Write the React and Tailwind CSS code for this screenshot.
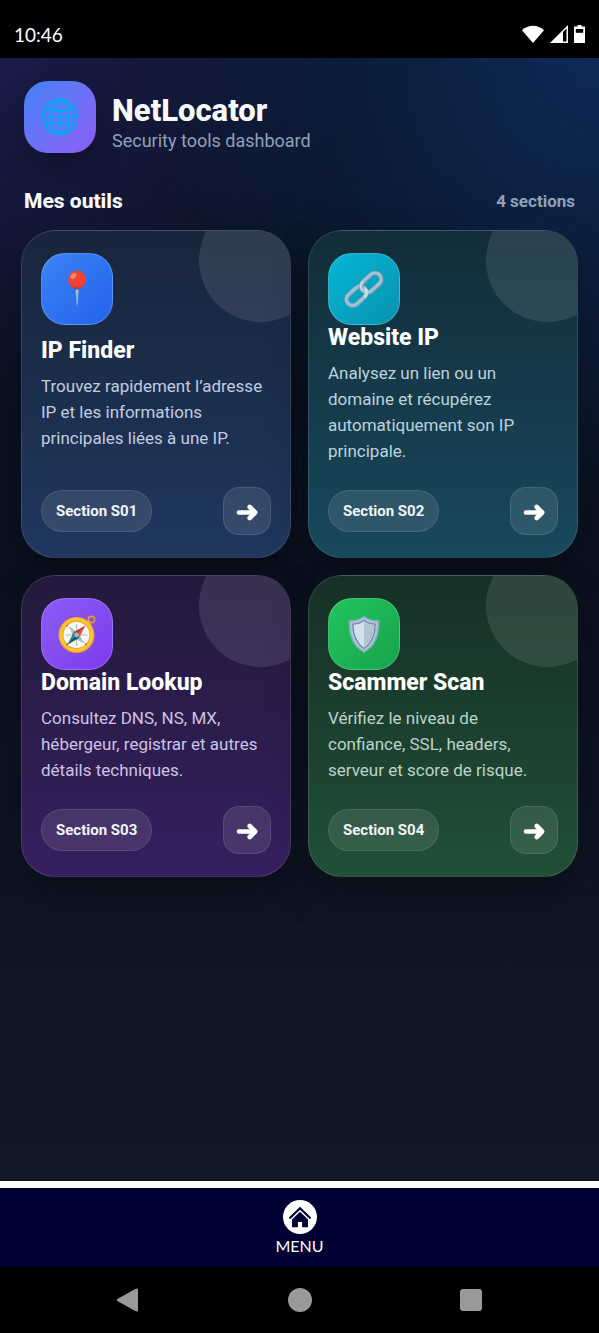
const GlobeIcon = () => (
    <svg viewBox="0 0 38 38" className="w-[38px] h-[38px]" fill="none" stroke="#0ea5f0" strokeWidth="2.4" aria-hidden="true">
        <circle cx="19" cy="19" r="17.2" />
        <ellipse cx="19" cy="19" rx="9.5" ry="17.2" />
        <path d="M19 2v34M2 19h34M4.5 10.5c8 3.4 21 3.4 29 0M4.5 27.5c8-3.4 21-3.4 29 0" />
    </svg>
);

const PinIcon = () => (
    <svg viewBox="0 0 40 40" className="w-10 h-10" aria-hidden="true">
        <path d="M18.3 18.500h3.600l-.9 14.500-.9 5.500-.9-5.500z" fill="#78a9cf" />
        <path d="M19.4 20h1.100l-.3 14z" fill="#c5dff0" />
        <path d="M18 18.500h4.200v2h-4.200z" fill="#39547f" />
        <circle cx="20.100" cy="10.500" r="8.900" fill="#f44336" />
        <path d="M12 14.500a8.900 8.900 0 0 0 16.600-1.500c-3 4.500-11 6-16.600 1.500z" fill="#dc3a30" />
        <ellipse cx="16.500" cy="7" rx="3.300" ry="2.300" transform="rotate(-40 16.500 7)" fill="#ff8a75" />
    </svg>
);

const LinkIcon = () => (
    <svg viewBox="0 0 40 40" className="w-10 h-10" fill="none" aria-hidden="true">
        <g transform="rotate(-42 20 20)">
            <rect x="-1.500" y="14" width="22.500" height="12.500" rx="6.250" stroke="#7d9dab" strokeWidth="4.600" />
            <rect x="-1.500" y="13.700" width="22.500" height="12.500" rx="6.250" stroke="#9fc0d2" strokeWidth="3.200" />
            <rect x="18" y="14" width="23" height="12.500" rx="6.250" stroke="#7898aa" strokeWidth="4.600" />
            <rect x="18" y="13.700" width="23" height="12.500" rx="6.250" stroke="#a5bfd3" strokeWidth="3.200" />
            <path d="M15 26.200c4 0 6-2.700 6-6.200" stroke="#c8dfe8" strokeWidth="3.400" />
            <path d="M24 13.700c-3.500 0-6 2.700-6 6.300" stroke="#bddbe7" strokeWidth="2" />
        </g>
    </svg>
);

const CompassIcon = () => (
    <svg viewBox="0 0 40 40" className="w-10 h-10" aria-hidden="true">
        <circle cx="34.500" cy="5.500" r="3.200" fill="none" stroke="#d99b2b" strokeWidth="1.700" />
        <path d="M29.500 7.500l3 3 2-2-3-3z" fill="#e9a825" />
        <circle cx="19.500" cy="21" r="18" fill="#e9a321" />
        <circle cx="19.500" cy="20.700" r="17" fill="#fcc52e" />
        <circle cx="19.500" cy="21" r="13.800" fill="#d8a13a" />
        <circle cx="19.500" cy="21" r="13" fill="#fbf9f5" />
        <path d="M19.500 10v22M8.500 21h22M11.700 13.200l15.600 15.600" stroke="#b4bcbb" strokeWidth="1.200" />
        <path d="M13 12.500l6.500 5.500 3.500 3 3 8-8-4.500-3-4z" fill="#aebdbd" />
        <path d="M28.500 11.500l-6.300 12.200-5.500-5.500z" fill="#e8544c" />
        <path d="M28.500 11.500l-9 9.500-2.800-2.800z" fill="#ba3e3c" />
        <path d="M10.500 30.500l6.200-12.300 5.500 5.500z" fill="#287e8c" />
        <path d="M10.500 30.500l9-9.500 2.700 2.700z" fill="#15606e" />
        <circle cx="19.500" cy="21" r="2.400" fill="#92b9c6" />
        <g fill="#8d6b2c">
            <circle cx="10.200" cy="11.700" r=".9" />
            <circle cx="28.900" cy="30.200" r=".9" />
            <circle cx="10.200" cy="30.200" r=".9" />
        </g>
    </svg>
);

const ShieldIcon = () => (
    <svg viewBox="0 0 40 40" className="w-10 h-10" aria-hidden="true">
        <path d="M20 1.500c4 3.500 9 4.800 15.500 4.500C36 21 32 32.500 20 39 8 32.500 4 21 4.500 6 11 6.300 16 5 20 1.500z" fill="#7fa8b3" />
        <path d="M20 3c4.200 3.200 8.500 4.300 14.200 4.200C34.300 21 30.500 31.500 20 37.500 9.500 31.500 5.700 21 5.800 7.200 11.500 7.300 15.800 6.200 20 3z" fill="#a9c4d2" />
        <path d="M20 6.500c3.500 2.500 7 3.500 11.200 3.700C31 21 28 29 20 34.500 12 29 9 21 8.800 10.200 13 10 16.500 9 20 6.500z" fill="#d4e1ed" stroke="#6f88a9" strokeWidth="1.300" />
        <path d="M20 7.500c3.500 2.300 6.500 3.200 10.400 3.500C30 21 27.300 28.500 20 33.700z" fill="#b3c4d3" />
    </svg>
);

const ArrowIcon = () => (
    <svg viewBox="0 0 24 24" className="w-6 h-6" fill="none" stroke="currentColor" strokeLinecap="round" strokeLinejoin="round" aria-hidden="true">
        <path d="M4 13.500h15" strokeWidth="4.600" />
        <path d="M14.700 8l5.500 5.500-5.500 5.500" strokeWidth="4.600" />
    </svg>
);

const tools = [
    {
        id: 'S01',
        title: 'IP Finder',
        text: 'Trouvez rapidement l’adresse IP et les informations principales liées à une IP.',
        icon: <PinIcon />,
        card: 'from-[#18253c] to-[#20375f]',
        badge: 'from-[#3b82f6] to-[#2563eb]',
        textColor: 'text-[#c1cce0]',
    },
    {
        id: 'S02',
        title: 'Website IP',
        text: 'Analysez un lien ou un domaine et récupérez automatiquement son IP principale.',
        icon: <LinkIcon />,
        card: 'from-[#122d39] to-[#17495c]',
        badge: 'from-[#06b6d4] to-[#0891b2]',
        textColor: 'text-[#bdd2de]',
    },
    {
        id: 'S03',
        title: 'Domain Lookup',
        text: 'Consultez DNS, NS, MX, hébergeur, registrar et autres détails techniques.',
        icon: <CompassIcon />,
        card: 'from-[#23193c] to-[#371f60]',
        badge: 'from-[#8b5cf6] to-[#7c3aed]',
        textColor: 'text-[#cbc4e2]',
    },
    {
        id: 'S04',
        title: 'Scammer Scan',
        text: 'Vérifiez le niveau de confiance, SSL, headers, serveur et score de risque.',
        icon: <ShieldIcon />,
        card: 'from-[#173026] to-[#205037]',
        badge: 'from-[#22c55e] to-[#16a34a]',
        textColor: 'text-[#bed2cc]',
    },
];

const StatusBar = () => (
    <div className="h-[58px] bg-black text-white flex items-end justify-between px-3.5 pb-[11px]">
        <span className="font-['Lato',sans-serif] text-[19px] leading-6">10:46</span>
        <div className="flex items-center gap-1.5 pb-1">
            <svg viewBox="0 0 22 18" className="w-[22px] h-[18px]" fill="currentColor" aria-hidden="true">
                <path d="M0 5.200C6-.900 16-.900 22 5.200L11 18z" />
            </svg>
            <svg viewBox="0 0 18 18" className="w-[18px] h-[18px]" aria-hidden="true">
                <path d="M18 0v18H0z" fill="currentColor" />
                <path d="M13 7l3.500-3.500v13H13z" fill="#000" />
            </svg>
            <svg viewBox="2.500 0 11 18" className="w-[11px] h-[18px]" aria-hidden="true">
                <path d="M6 0h4v1.500h3.500V18h-11V1.500H6z" fill="currentColor" />
                <path d="M4.300 4h7.400v3.800H4.300z" fill="#000" />
            </svg>
        </div>
    </div>
);

const ToolCard = ({ tool }) => (
    <article
        className={`relative overflow-hidden flex flex-col justify-between rounded-[34px] border border-white/12 bg-linear-to-b px-[19px] py-[22px] shadow-[0_18px_40px_rgba(0,0,0,0.28)] ${tool.card}`}
    >
        <div className="absolute -top-8 -right-8 w-[123px] h-[123px] rounded-full bg-white/10" />
        <div className={`w-18 h-18 rounded-3xl border border-white/20 bg-linear-to-br flex items-center justify-center ${tool.badge}`}>
            {tool.icon}
        </div>
        <div className="pb-[23px]">
            <h3 className="text-[23px] leading-[26px] font-extrabold text-white">{tool.title}</h3>
            <p className={`mt-[9px] text-[17px] leading-[26px] ${tool.textColor}`}>{tool.text}</p>
        </div>
        <div className="flex items-center justify-between">
            <span className="rounded-full border border-white/10 bg-white/10 px-3.5 py-2 text-[15px] leading-6 font-bold text-slate-100">
                Section {tool.id}
            </span>
            <button
                type="button"
                aria-label={tool.title}
                className="w-12 h-12 rounded-2xl border border-white/10 bg-white/10 text-white flex items-center justify-center"
            >
                <ArrowIcon />
            </button>
        </div>
    </article>
);

const App = () => {
    return (
        <div className="min-h-screen flex flex-col bg-black font-['Roboto',sans-serif]">
            <StatusBar />

            {/* Dashboard */}
            <main className="flex-1 px-[21px] pt-[23px] pb-8 bg-[radial-gradient(circle_at_top_right,rgba(37,99,235,0.28),transparent_35%),radial-gradient(circle_at_top_left,rgba(99,58,237,0.22),transparent_28%),linear-gradient(to_bottom,#07131e,#0b1120_50%,#111827)]">
                <header className="flex items-end gap-4 px-[3px]">
                    <div className="w-18 h-18 shrink-0 rounded-3xl bg-linear-to-br from-[#3b82f6] to-[#8b5cf6] flex items-center justify-center shadow-[0_14px_30px_rgba(0,0,0,0.3)]">
                        <GlobeIcon />
                    </div>
                    <div>
                        <h1 className="text-[31px] leading-9 font-extrabold text-slate-50">NetLocator</h1>
                        <p className="text-lg leading-6 text-slate-400">Security tools dashboard</p>
                    </div>
                </header>

                <div className="mt-[34px] mb-[15px] flex items-center justify-between px-[3px]">
                    <h2 className="text-[21px] leading-7 font-extrabold text-slate-50">Mes outils</h2>
                    <span className="text-[17px] leading-7 font-bold text-slate-400">4 sections</span>
                </div>

                <section className="grid grid-cols-2 gap-[17px]">
                    {tools.map((tool) => (
                        <ToolCard key={tool.id} tool={tool} />
                    ))}
                </section>
            </main>

            {/* Bottom menu */}
            <nav className="h-[86px] border-t-[7px] border-white bg-[#000033] flex justify-center">
                <a href="#menu" className="flex flex-col items-center pt-3 text-white">
                    <svg viewBox="0 0 34 34" className="w-[34px] h-[34px]" aria-hidden="true">
                        <circle cx="17" cy="17" r="17" fill="#fff" />
                        <path d="M7.200 17.800L17 8.300l9.800 9.500" fill="none" stroke="#000033" strokeWidth="2.200" strokeLinecap="round" />
                        <path d="M17 11.700l8 7.800v7.800h-5.900V22h-4.200v5.300H9v-7.800z" fill="#000033" />
                    </svg>
                    <span className="font-['Lato',sans-serif] text-base leading-6">MENU</span>
                </a>
            </nav>

            {/* Android buttons */}
            <div className="h-[66px] bg-black text-[#999999] flex items-center justify-between px-[117px]">
                <button type="button" aria-label="Back">
                    <svg viewBox="0 0 22 24" className="w-[22px] h-6" fill="currentColor" stroke="currentColor" strokeWidth="3" strokeLinejoin="round" aria-hidden="true">
                        <path d="M1.500 12L19.500 2v20z" />
                    </svg>
                </button>
                <button type="button" aria-label="Home">
                    <span className="block w-6 h-6 rounded-full bg-current" />
                </button>
                <button type="button" aria-label="Recent apps">
                    <span className="block w-[22px] h-[22px] rounded-[3px] bg-current" />
                </button>
            </div>
        </div>
    );
};

export default App;
